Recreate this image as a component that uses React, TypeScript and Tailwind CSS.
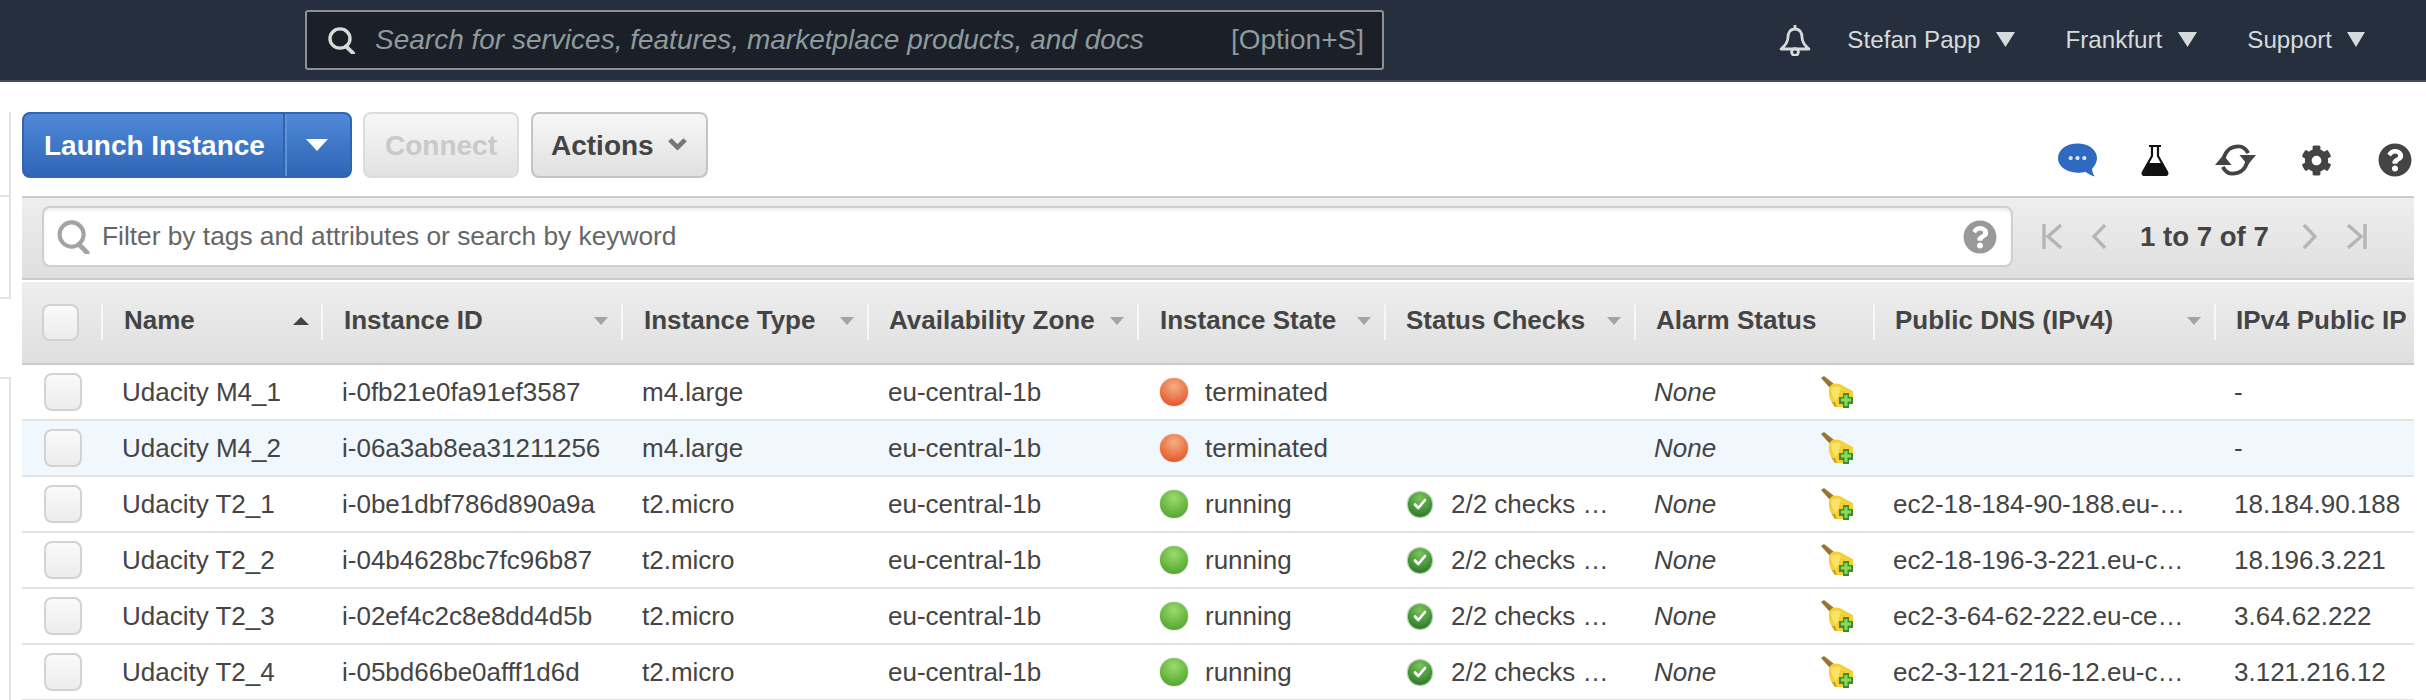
import { FaCog, FaQuestionCircle } from "react-icons/fa";

const COLS = "grid grid-cols-[79px_220px_300px_246px_270px_247px_250px_239px_341px_200px]";

const instances = [
  { name: "Udacity M4_1", id: "i-0fb21e0fa91ef3587", type: "m4.large", state: "terminated", checks: "", dns: "", ip: "-" },
  { name: "Udacity M4_2", id: "i-06a3ab8ea31211256", type: "m4.large", state: "terminated", checks: "", dns: "", ip: "-", hover: true },
  { name: "Udacity T2_1", id: "i-0be1dbf786d890a9a", type: "t2.micro", state: "running", checks: "2/2 checks …", dns: "ec2-18-184-90-188.eu-…", ip: "18.184.90.188" },
  { name: "Udacity T2_2", id: "i-04b4628bc7fc96b87", type: "t2.micro", state: "running", checks: "2/2 checks …", dns: "ec2-18-196-3-221.eu-c…", ip: "18.196.3.221" },
  { name: "Udacity T2_3", id: "i-02ef4c2c8e8dd4d5b", type: "t2.micro", state: "running", checks: "2/2 checks …", dns: "ec2-3-64-62-222.eu-ce…", ip: "3.64.62.222" },
  { name: "Udacity T2_4", id: "i-05bd66be0afff1d6d", type: "t2.micro", state: "running", checks: "2/2 checks …", dns: "ec2-3-121-216-12.eu-c…", ip: "3.121.216.12" },
];

function Tri({ className }: { className: string }) {
  return (
    <svg viewBox="0 0 20 16" preserveAspectRatio="none" className={className} fill="currentColor">
      <path d="M0 0h20L10 16z" />
    </svg>
  );
}

function SearchGlyph({ className }: { className: string }) {
  return (
    <svg viewBox="0 0 30 28" className={className} preserveAspectRatio="none" fill="none" stroke="currentColor" strokeWidth="3.4">
      <circle cx="13" cy="12" r="10" />
      <path d="M19 20l7 7" strokeWidth="4" strokeLinecap="round" />
    </svg>
  );
}

function Checkbox({ size }: { size: string }) {
  return (
    <div className={`${size} rounded-lg border-2 border-[#d2d2d2] bg-gradient-to-b from-[#fafafa] to-[#ececec]`} />
  );
}

function Broom() {
  return (
    <svg viewBox="0 0 32 32" className="mr-5 ml-auto h-8 w-8 shrink-0">
      <path d="M0 2l3-2 10 8-4 4z" fill="#9a742c" />
      <path d="M9 10c4-4 10-3 15 1l8 4v8l-6 8H14C9 25 6 17 9 10z" fill="#f3cf38" />
      <path d="M10 13c3-3 7-3 10-1l-5 14C12 22 10 17 10 13z" fill="#fbe268" />
      <path d="M14 26c1 2 1 4 2 5h-2c-1-1-2-3-3-5z" fill="#c9a02a" />
      <path d="M22 17h6v4h4v7h-4v4h-6v-4h-4v-7h4z" fill="#3d8c30" />
      <path d="M23.500 19h3v3.500H30v3h-3.500V30h-3v-4.500H20v-3h3.500z" fill="#8bdb5a" />
    </svg>
  );
}

function CheckBadge() {
  return (
    <div className="mr-[19px] ml-px flex h-[25px] w-6 shrink-0 items-center justify-center rounded-full bg-[radial-gradient(circle_at_50%_25%,#7cc35c,#2f7d2d_80%)] shadow-[0_0_1px_1px_#a9c9a0]">
      <svg viewBox="0 0 16 16" className="h-4 w-4" fill="none" stroke="#fff" strokeWidth="2.6" strokeLinecap="round" strokeLinejoin="round">
        <path d="M3 8.500l3.300 3.500L13 4" />
      </svg>
    </div>
  );
}

function HeaderCell({ label, arrow, inset }: { label: string; arrow?: "up" | "down"; inset: string }) {
  return (
    <div className={`relative flex items-center pb-1 ${inset} font-bold text-[#444]`}>
      <div className="absolute top-[22px] left-0 h-9 w-[2px] bg-[#f7f7f7]" />
      <span className="whitespace-nowrap">{label}</span>
      {arrow === "down" && <Tri className="mr-[13px] ml-auto h-2 w-[14px] shrink-0 text-[#a4a4a4]" />}
      {arrow === "up" && <Tri className="mr-3 ml-auto h-2 w-4 shrink-0 rotate-180 text-[#444]" />}
    </div>
  );
}

export default function App() {
  return (
    <div className="h-[700px] overflow-hidden bg-white text-[26px] text-[#444] [font-family:'Liberation_Sans',Arial,sans-serif]">
      {/* Console top bar */}
      <div className="flex h-[82px] items-center border-b-2 border-[#444d5c] bg-[#252f3e] pr-[61px] pl-[305px]">
        <div className="flex h-[60px] w-[1079px] items-center rounded-[3px] border-2 border-[#879196] bg-[#1b1f27] pr-[18px] pl-[20px] text-[28px] text-[#8d9a9e]">
          <SearchGlyph className="mr-[18px] h-[27px] w-[30px] shrink-0 text-[#d5dbdb]" />
          <span className="italic">Search for services, features, marketplace products, and docs</span>
          <span className="ml-auto">[Option+S]</span>
        </div>
        <div className="ml-auto flex items-center text-[24.2px] text-[#d5dbdb]">
          <svg viewBox="0 0 32 32" className="mr-9 h-8 w-8" fill="none" stroke="currentColor" strokeWidth="2.8" strokeLinejoin="round">
            <path d="M16 1v4M16 5c-5 0-7 4-7 8 0 5-2 8-7 12h28c-5-4-7-7-7-12 0-4-2-8-7-8z" />
            <circle cx="16" cy="28" r="3.400" />
          </svg>
          <span>Stefan Papp</span>
          <Tri className="mr-[51px] ml-[15px] h-[15px] w-[19px]" />
          <span>Frankfurt</span>
          <Tri className="mr-[50px] ml-4 h-[15px] w-[19px]" />
          <span>Support</span>
          <Tri className="ml-[15px] h-[15px] w-[18px]" />
        </div>
      </div>

      <div className="flex">
        {/* Collapsed side panel edge */}
        <div className="w-[11px] shrink-0">
          <div className="mt-[30px] h-[85px] border-r-2 border-b-2 border-[#e2e2e2]" />
          <div className="h-[102px] border-r-2 border-b-2 border-[#e2e2e2]" />
          <div className="mt-[78px] h-[400px] border-t-2 border-r-2 border-[#e2e2e2]" />
        </div>

        <div className="ml-[11px] w-[2392px]">
          {/* Toolbar */}
          <div className="flex h-[114px] items-start pt-[30px]">
            <div className="flex h-[66px] w-[330px] overflow-hidden rounded-lg border-2 border-[#2f64ae] bg-gradient-to-b from-[#5089da] to-[#2f66b5] text-[28px] font-bold text-white">
              <div className="flex w-[261px] items-center border-r-2 border-[#2f64ae] pt-[2px] pl-5">Launch Instance</div>
              <div className="flex flex-1 items-center justify-center border-l-2 border-[#5f91d8]">
                <Tri className="mr-[3px] h-3 w-[22px]" />
              </div>
            </div>
            <div className="ml-[11px] flex h-[66px] w-[156px] items-center justify-center rounded-lg border-2 border-[#dcdcdc] bg-gradient-to-b from-[#f7f7f7] to-[#e2e2e2] pt-[2px] text-[28px] font-bold text-[#c9c9c9]">
              Connect
            </div>
            <div className="ml-3 flex h-[66px] w-[177px] items-center rounded-lg border-2 border-[#c4c4c4] bg-gradient-to-b from-[#f7f7f7] to-[#e0e0e0] pt-[2px] pl-[18px] text-[28px] font-bold text-[#444]">
              Actions
              <svg viewBox="0 0 20 14" preserveAspectRatio="none" className="mb-1 ml-[14px] h-3 w-[19px] text-[#777]" fill="none" stroke="currentColor" strokeWidth="5">
                <path d="M2 2l8 9 8-9" />
              </svg>
            </div>
            <div className="mt-[31px] ml-auto flex items-center pr-[2px]">
              <svg viewBox="0 0 40 34" className="mr-[44px] ml-[1px] h-[34px] w-[39px]">
                <path d="M20 0C9 0 0 6 0 15s9 15 20 15c3 0 6 0 8-1 3 2 6 4 10 5-2-2-3-5-3-8 3-3 5-7 5-11C40 6 31 0 20 0z" fill="#2e69c2" />
                <circle cx="13" cy="15" r="2.200" fill="#dbe6f6" />
                <circle cx="20" cy="15" r="2.200" fill="#dbe6f6" />
                <circle cx="27" cy="15" r="2.200" fill="#dbe6f6" />
              </svg>
              <svg viewBox="0 0 28 32" className="mr-[46px] h-8 w-7">
                <path d="M8 2h12M11 2v10L2 28c-1 2 0 3 2 3h20c2 0 3-1 2-3L17 12V2" fill="none" stroke="#111" strokeWidth="2.2" />
                <path d="M7.500 19h13l6 11H2z" fill="#111" />
              </svg>
              <svg viewBox="0 0 42 34" className="mr-[45px] h-[34px] w-[41px]" fill="none" stroke="#444" strokeWidth="4">
                <path d="M9 15C11 7 17 3 24 3c5 0 8 3 10 7" />
                <path d="M33 19c-2 8-8 12-15 12-5 0-8-3-10-7" />
                <path d="M25 12h17l-8.500 10zM0 22h17L8.500 12z" fill="#444" stroke="none" />
              </svg>
              <FaCog className="mr-[46px] h-[31px] w-[31px] text-[#444]" />
              <FaQuestionCircle className="h-[34px] w-[34px] text-[#444]" />
            </div>
          </div>

          {/* Filter bar */}
          <div className="flex h-[84px] items-start border-y-2 border-[#cbcbcb] bg-gradient-to-b from-[#eeeeee] to-[#dfdfdf] pt-2">
            <div className="ml-5 flex h-[61px] w-[1971px] items-center rounded-lg border-2 border-[#cfcfcf] bg-white pr-[14px] pl-3 text-[26.3px] text-[#666] shadow-[inset_0_3px_3px_#f0f0f0]">
              <SearchGlyph className="mr-[10px] h-[34px] w-[36px] shrink-0 text-[#a3a3a3]" />
              <span>Filter by tags and attributes or search by keyword</span>
              <FaQuestionCircle className="ml-auto h-[34px] w-[34px] text-[#999]" />
            </div>
            <div className="ml-[29px] flex h-[61px] items-center text-[#b5b5b5]">
              <svg viewBox="0 0 20 25" className="h-[25px] w-5" fill="none" stroke="currentColor" strokeWidth="3.4">
                <path d="M2 0v25M19 1L6 12.500 19 24" />
              </svg>
              <svg viewBox="0 0 14 25" className="ml-[30px] h-[25px] w-[14px]" fill="none" stroke="currentColor" strokeWidth="3.4">
                <path d="M13 1L2 12.500 13 24" />
              </svg>
              <span className="mx-[34px] text-[27.6px] font-bold whitespace-nowrap text-[#444]">1 to 7 of 7</span>
              <svg viewBox="0 0 14 25" className="h-[25px] w-[14px]" fill="none" stroke="currentColor" strokeWidth="3.4">
                <path d="M1 1l11 11.500L1 24" />
              </svg>
              <svg viewBox="0 0 20 25" className="ml-[30px] h-[25px] w-5" fill="none" stroke="currentColor" strokeWidth="3.4">
                <path d="M18 0v25M1 1l13 11.500L1 24" />
              </svg>
            </div>
          </div>

          {/* Instances table */}
          <div className={`${COLS} mt-[2px] h-[83px] border-b-2 border-[#cbcbcb] bg-gradient-to-b from-[#eeeeee] to-[#dfdfdf]`}>
            <div className="flex items-start pt-[22px] pl-5">
              <Checkbox size="h-[37px] w-[37px]" />
            </div>
            <HeaderCell label="Name" arrow="up" inset="pl-[23px]" />
            <HeaderCell label="Instance ID" arrow="down" inset="pl-[23px]" />
            <HeaderCell label="Instance Type" arrow="down" inset="pl-[23px]" />
            <HeaderCell label="Availability Zone" arrow="down" inset="pl-[22px]" />
            <HeaderCell label="Instance State" arrow="down" inset="pl-[23px]" />
            <HeaderCell label="Status Checks" arrow="down" inset="pl-[22px]" />
            <HeaderCell label="Alarm Status" inset="pl-[22px]" />
            <HeaderCell label="Public DNS (IPv4)" arrow="down" inset="pl-[22px]" />
            <HeaderCell label="IPv4 Public IP" inset="pl-[22px]" />
          </div>

          {instances.map((row) => (
            <div
              key={row.id}
              className={`${COLS} h-14 items-center border-b-2 border-[#e3e3e3] whitespace-nowrap ${row.hover ? "bg-[#f0f7fd]" : "bg-white"}`}
            >
              <div className="pl-[22px]">
                <Checkbox size="h-[38px] w-[38px]" />
              </div>
              <div className="pl-[21px]">{row.name}</div>
              <div className="pl-[21px]">{row.id}</div>
              <div className="pl-[21px]">{row.type}</div>
              <div className="pl-[21px]">eu-central-1b</div>
              <div className="flex items-center pl-[23px]">
                <div
                  className={`mr-[17px] h-7 w-7 rounded-full ${
                    row.state === "running"
                      ? "bg-[radial-gradient(circle_at_50%_30%,#9cdb6c,#57ab35_75%)] shadow-[0_0_1px_#4a8f2e]"
                      : "bg-[radial-gradient(circle_at_50%_30%,#f5ad85,#e65f30_75%)] shadow-[0_0_1px_#c2512a]"
                  }`}
                />
                {row.state}
              </div>
              <div className="flex items-center pl-[23px]">
                {row.checks && <CheckBadge />}
                {row.checks}
              </div>
              <div className="flex items-center pl-5 italic">
                None
                <Broom />
              </div>
              <div className="pl-5">{row.dns}</div>
              <div className="pl-5">{row.ip}</div>
            </div>
          ))}
        </div>
      </div>
    </div>
  );
}
